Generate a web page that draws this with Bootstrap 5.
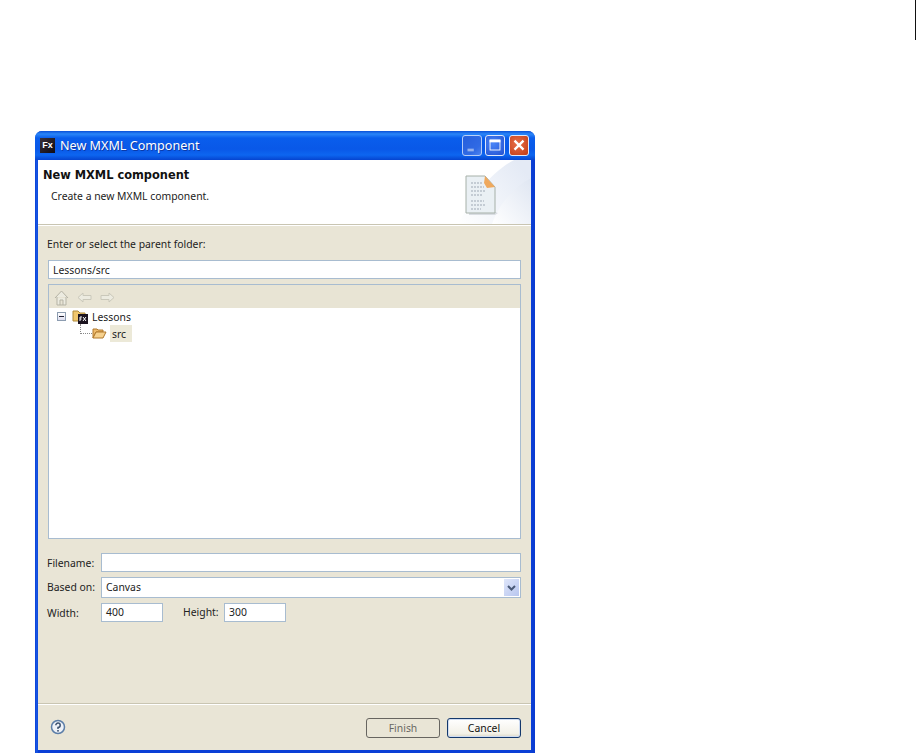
<!DOCTYPE html>
<html lang="en">
<head>
<meta charset="utf-8">
<title>New MXML Component</title>
<link href="https://cdn.jsdelivr.net/npm/bootstrap@5.3.0/dist/css/bootstrap.min.css" rel="stylesheet">
<style>
html,body{height:100%;}
body{background:#fff;overflow:hidden;font-family:"Noto Sans","DejaVu Sans",sans-serif;font-size:10.4px;line-height:13px;color:#222;}
.top-strip{height:40px;}
.top-tick{width:1px;height:40px;background:#111;}
.page-gap{padding:91px 0 0 35px;}
.xp-win{width:500px;height:622px;background:linear-gradient(90deg,#0a3fd6,#1a5ce6 2px,#0a3fd6 3px,#0a3fd6 496px,#0a3ad0);border-radius:7px 7px 0 0;padding:0 4px 3px 3px;}
.xp-title{height:29px;margin:0 -4px 0 -3px;padding:0 6px 0 5px;border-radius:7px 7px 0 0;background:linear-gradient(#0a50d8 0,#2a86f8 3px,#0a5eec 7px,#0958e8 18px,#0d66f0 24px,#0544d0 29px);}
.fx-ico{width:15px;height:15px;background:linear-gradient(135deg,#3a3038,#100c14);color:#fff;font:bold 9px/14px "Liberation Sans",sans-serif;text-align:center;}
.xp-name{color:#fff;font-size:12.6px;line-height:29px;text-shadow:1px 1px 0 #0a3aa8;margin-left:5px;}
.cap-btn{width:20px;height:21px;border:1px solid #dfe8fb;border-radius:3px;margin-left:3px;display:block;}
.cap-min{background:linear-gradient(135deg,#2d5fd8,#3b6fe4 70%,#5d8cf0);opacity:.8;}
.cap-max{background:radial-gradient(circle at 40% 40%,#4a86f8,#2350d0);}
.cap-close{background:radial-gradient(circle at 40% 40%,#e8704a,#c23a14);margin-left:4px;}
.xp-body{height:590px;background:#e9e5d6;}
.xp-head{height:65px;background:#fff;border-bottom:1px solid #c9c5b2;padding:8px 0 0 5px;position:relative;overflow:hidden;}
.head-title{font-weight:700;font-size:11.4px;line-height:15px;color:#111;font-family:"DejaVu Sans",sans-serif;}
.head-sub{margin:7px 0 0 8px;line-height:13px;}
.head-art{position:absolute;right:0;top:0;width:91px;height:64px;}
.doc-art{position:absolute;left:25px;top:15px;}
.sep-light{height:1px;background:#fff;}
.xp-form{padding:12px 10px 0 9px;}
.top-lab{margin-bottom:9px;}
.field-box{display:block;flex:1 1 auto;height:19px;background:#fff;border:1px solid #a8bcd0;padding:2px 4px;line-height:13px;color:#222;}
.inset-one{margin-left:1px;}
.field-path{padding-top:3px;}
.tree-box{height:255px;margin-top:5px;background:#fff;border:1px solid #a8bcd0;}
.tree-tools{height:23px;background:#e8e4d4;padding:2px 0 0 5px;gap:8px;}
.tree-rows{padding:0 0 0 8px;}
.tree-row{height:17px;}
.tree-sub{padding-left:24px;}
.tree-text{padding-top:1px;}
.folder-ico{margin:0 2px 0 6px;}
.exp-box{width:9px;height:9px;border:1px solid #8c9cb0;background:linear-gradient(#fff,#dde);position:relative;}
.exp-box::after{content:"";position:absolute;left:1px;top:3px;width:5px;height:1px;background:#223;}
.dot-link{width:12px;height:10px;border-left:1px dotted #888;border-bottom:1px dotted #888;margin:-9px 0 0 -1px;}
.sel-name{background:#ece9d8;padding:3px 2px 1px;height:17px;margin-left:3px;width:22px;}
.form-rows{margin-top:14px;}
.lab-col{width:54px;flex:none;padding-top:1px;}
.row-one{height:19px;margin-bottom:5px;}
.row-tall{height:21px;}
.row-tall .lab-col{padding-top:0;}
.row-tall .field-box{height:21px;padding-top:3px;}
.num-box{width:62px;flex:none;}
.combo-arrow{width:15px;height:17px;background:linear-gradient(135deg,#dfe6fa,#b8c6ef);margin:-2px -3px 0 auto;}
.height-lab{width:61px;padding-left:20px;flex:none;}
.foot-line{height:2px;background:#c9c5b2;border-bottom:1px solid #fff;}
.xp-foot{height:45px;padding:13px 10px 0 12px;}
.xp-foot-inner{height:20px;}
.help-mark{width:16px;height:16px;margin-top:-2px;}
.dlg-btn{width:74px;height:20px;font-size:10.4px;line-height:16px;padding:0;border-radius:3px;font-family:inherit;}
.btn-finish{background:#f0eee3;border:1px solid #cfcbbd;color:#a5a299;margin-right:7px;}
.btn-cancel{background:linear-gradient(#fff,#f3f1e8 80%,#dcd8c8);border:1px solid #14386c;color:#111;box-shadow:inset 0 0 0 1px #cfdcf2;}
</style>
</head>
<body>
<div class="top-strip d-flex justify-content-end"><div class="top-tick"></div></div>
<div class="page-gap">
<div class="xp-win d-flex flex-column">
  <div class="xp-title d-flex align-items-center">
    <span class="fx-ico">Fx</span>
    <span class="xp-name">New MXML Component</span>
    <span class="ms-auto d-flex align-items-center">
      <svg class="cap-btn cap-min" viewBox="0 0 20 21"><rect x="5" y="14" width="7" height="3" fill="#b7c8ee"/></svg>
      <svg class="cap-btn cap-max" viewBox="0 0 20 21"><rect x="4.500" y="4.500" width="11" height="11" fill="none" stroke="#fff"/><rect x="4" y="4" width="12" height="3" fill="#fff"/></svg>
      <svg class="cap-btn cap-close" viewBox="0 0 20 21"><path d="M5 5l10 10M15 5L5 15" stroke="#fff" stroke-width="2.600"/></svg>
    </span>
  </div>
  <div class="xp-body d-flex flex-column">
    <div class="xp-head">
      <div class="head-art">
        <svg class="position-absolute top-0 start-0" width="91" height="64" viewBox="0 0 91 64">
          <defs>
            <linearGradient id="sheenA" x1="0" y1="1" x2="1" y2="0"><stop offset="0" stop-color="#fff"/><stop offset="1" stop-color="#dfe6f2"/></linearGradient>
            <linearGradient id="sheenB" x1="0" y1="1" x2="1" y2="0.300"><stop offset="0" stop-color="#fff"/><stop offset="1" stop-color="#e4eaf5"/></linearGradient>
          </defs>
          <path d="M18 64C30 42 48 14 74 0H91V64Z" fill="url(#sheenB)"/>
          <path d="M52 64C58 46 72 28 91 18V64Z" fill="url(#sheenA)"/>
        </svg>
        <svg class="doc-art" width="34" height="41" viewBox="0 0 34 41">
          <path d="M4 37l26 0 3 1-3 2H4Z" fill="#d9dde2"/>
          <path d="M1 1H20L30 12V38H1Z" fill="#eaf0f4" stroke="#a6b0a8"/>
          <path d="M20 1L30 12 22 13 19 8Z" fill="#efa95e"/>
          <path d="M6 8h11M6 12h13M6 16h15M6 20h11M6 26h13M6 30h14M6 34h10" stroke="#9ea8b4" stroke-dasharray="2 1"/>
        </svg>
      </div>
      <div class="head-title">New MXML component</div>
      <div class="head-sub">Create a new MXML component.</div>
    </div>
    <div class="sep-light"></div>
    <div class="xp-form flex-grow-1">
      <div class="top-lab">Enter or select the parent folder:</div>
      <div class="field-box field-path inset-one">Lessons/src</div>
      <div class="tree-box inset-one">
        <div class="tree-tools d-flex align-items-center">
          <svg width="15" height="17" viewBox="0 0 15 17"><path d="M1 9L7.500 2l6.500 7M3 8v8h9V8M6 16v-5h3v5" fill="#ecebe0" stroke="#b5b3a5"/></svg>
          <svg width="15" height="11" viewBox="0 0 15 11"><path d="M1 5.500L6 1v2.500h8v4H6V10Z" fill="#ecebe0" stroke="#cac8ba"/></svg>
          <svg width="15" height="11" viewBox="0 0 15 11"><path d="M14 5.500L9 1v2.500H1v4h8V10Z" fill="#ecebe0" stroke="#cac8ba"/></svg>
        </div>
        <div class="tree-rows">
          <div class="tree-row d-flex align-items-center">
            <span class="exp-box"></span>
            <svg class="folder-ico" width="18" height="17" viewBox="0 0 18 17"><path d="M1 3h5l2 2h5v8H1Z" fill="#f1c76e" stroke="#b08a3a"/><rect x="6" y="6" width="10" height="10" fill="#1c1420"/><path d="M8 13V9h2M8 11h1.500M11 9l3 4M14 9l-3 4" stroke="#fff" fill="none"/></svg>
            <span class="tree-text">Lessons</span>
          </div>
          <div class="tree-row tree-sub d-flex align-items-center">
            <span class="dot-link"></span>
            <svg width="15" height="13" viewBox="0 0 15 13"><path d="M1 2h4l1 1h5v2H4L1 11Z" fill="#eebb6c" stroke="#b0782c"/><path d="M4 5h10l-3 6H1Z" fill="#f6d18e" stroke="#b0782c"/></svg>
            <span class="sel-name">src</span>
          </div>
        </div>
      </div>
      <div class="form-rows">
        <div class="row-one d-flex align-items-center"><span class="lab-col">Filename:</span><span class="field-box"></span></div>
        <div class="row-one row-tall d-flex align-items-center"><span class="lab-col">Based on:</span><span class="field-box d-flex">Canvas<span class="combo-arrow d-flex align-items-center justify-content-center"><svg width="9" height="6" viewBox="0 0 9 6"><path d="M1 1l3.500 3.500L8 1" fill="none" stroke="#4a5a78" stroke-width="2"/></svg></span></span></div>
        <div class="row-one d-flex align-items-center"><span class="lab-col">Width:</span><span class="field-box num-box">400</span><span class="height-lab">Height:</span><span class="field-box num-box">300</span></div>
      </div>
    </div>
    <div class="foot-line"></div>
    <div class="xp-foot">
      <div class="xp-foot-inner d-flex align-items-center">
        <svg class="help-mark" viewBox="0 0 16 16"><circle cx="8" cy="8" r="6.500" fill="#eef2f8" stroke="#5c7ea8" stroke-width="1.500"/><path d="M5.800 6.300A2.200 2.200 0 1 1 8 8.500v1.500" fill="none" stroke="#3c5270" stroke-width="1.500"/><rect x="7.200" y="11" width="1.600" height="1.600" fill="#3c5270"/></svg>
        <span class="ms-auto"></span>
        <button type="button" class="btn dlg-btn btn-finish" disabled>Finish</button>
        <button type="button" class="btn dlg-btn btn-cancel">Cancel</button>
      </div>
    </div>
  </div>
</div>
</div>
</body>
</html>
